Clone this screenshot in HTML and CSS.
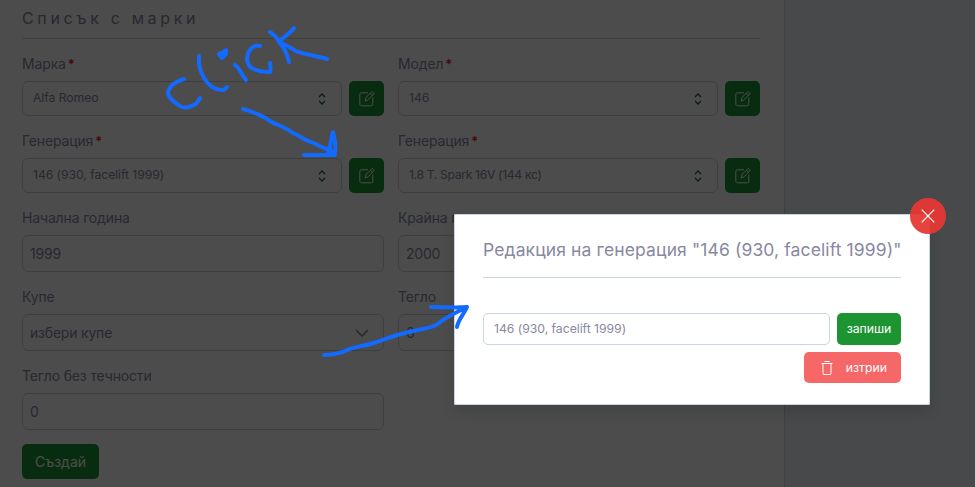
FILE: index.html
```html
<!DOCTYPE html>
<html lang="bg">
<head>
<meta charset="utf-8">
<title>Списък с марки</title>
<link rel="stylesheet" href="styles.css">
</head>
<body>
<svg class="defs" width="0" height="0">
  <symbol id="edit" viewBox="0 0 16 16"><path d="M9 1.8H2.3Q.8 1.8.8 3.3v10q0 1.5 1.5 1.5h10q1.500 0 1.500-1.500V6.500M6 10l.9-3.400L12.700.9q.7-.6 1.400 0l.6.6q.7.700 0 1.400L9 8.900zM11.500 2.200l2 2"/></symbol>
  <symbol id="sort" viewBox="0 0 8 12"><path d="M1 4l3-3 3 3M1 8l3 3 3-3"/></symbol>
</svg>
<main class="page">
  <section class="panel">
    <h1 class="heading">Списък с марки</h1>
    <form class="form">
      <div class="field">
        <label class="label">Марка<b class="req">*</b></label>
        <div class="picker"><div class="select"><span>Alfa Romeo</span><svg class="sort"><use href="#sort"/></svg></div><button type="button" class="edit"><svg><use href="#edit"/></svg></button></div>
      </div>
      <div class="field">
        <label class="label">Модел<b class="req">*</b></label>
        <div class="picker"><div class="select"><span>146</span><svg class="sort"><use href="#sort"/></svg></div><button type="button" class="edit"><svg><use href="#edit"/></svg></button></div>
      </div>
      <div class="field">
        <label class="label">Генерация<b class="req">*</b></label>
        <div class="picker"><div class="select"><span>146 (930, facelift 1999)</span><svg class="sort"><use href="#sort"/></svg></div><button type="button" class="edit"><svg><use href="#edit"/></svg></button></div>
      </div>
      <div class="field">
        <label class="label">Генерация<b class="req">*</b></label>
        <div class="picker"><div class="select"><span class="engine">1.8 T. Spark 16V (144 кс)</span><svg class="sort"><use href="#sort"/></svg></div><button type="button" class="edit"><svg><use href="#edit"/></svg></button></div>
      </div>
      <div class="field"><label class="label">Начална година</label><div class="input">1999</div></div>
      <div class="field"><label class="label">Крайна година</label><div class="input">2000</div></div>
      <div class="field"><label class="label">Купе</label><div class="input"><span>избери купе</span><svg class="chevron" viewBox="0 0 14 8"><path d="M1 1l6 6 6-6"/></svg></div></div>
      <div class="field"><label class="label">Тегло</label><div class="input">0</div></div>
      <div class="field"><label class="label">Тегло без течности</label><div class="input">0</div></div>
      <button type="button" class="create">Създай</button>
    </form>
  </section>
</main>
<div class="overlay"></div>
<div class="modal">
  <button class="close"><svg viewBox="0 0 14 14"><path d="M.7.7l12.600 12.600M13.300.7L.7 13.300"/></svg></button>
  <h2 class="modal-title">Редакция на генерация "146 (930, facelift 1999)"</h2>
  <div class="modal-row"><div class="modal-input">146 (930, facelift 1999)</div><button class="save">запиши</button></div>
  <button class="delete"><svg viewBox="0 0 12 16"><path d="M3.500 1.500h5M.5 3.500h11M2 3.500v10q0 1 1 1h6q1 0 1-1v-10"/></svg>изтрии</button>
</div>
<svg class="ink" viewBox="0 0 975 487">
  <path d="M184 79C177 81 170 85 168 92C168 99 176 103 180 106C184 109 190 107 194 105C198 103 198 101 200 98"/>
  <path d="M199 56C198 65 200 71 204 78C209 86 216 90 222 90Q225 90 227 87"/>
  <path class="dot" d="M219 54l3-1 4-3v4l-4 4z"/>
  <path d="M235 65C239 67 241 74 246 80M260 46C252 44 247 52 247 60C248 69 258 72 270 72Q271 69 270 63"/>
  <path d="M270 32C277 36 278 41 283 47C286 52 288 56 289 62M294 28C289 35 284 36 279 42C287 45 291 48 296 51C305 55 315 55 327 59"/>
  <path d="M243 109C252 111 259 115 266 118C271 124 283 125 293 133C301 136 303 140 311 142C320 146 327 150 334 152M304 155H335M328 154C331 147 331 137 333 132C335 139 336 147 335 152M329 148l5 6"/>
  <path d="M324 355C332 355 338 353 343 352C353 346 363 347 377 342C390 337 402 333 418 330C427 328 434 327 438 324C445 317 458 312 467 307M431 307C445 307 456 308 467 307C464 314 458 320 457 327"/>
</svg>
</body>
</html>
```

FILE: styles.css
```css
* { box-sizing: border-box; }
body { margin: 0; width: 975px; height: 487px; overflow: hidden; background: #eff3f8; color: #8888a0; font: 14px/20px Inter, "Liberation Sans", sans-serif; position: relative; }
button { font: inherit; border: 0; padding: 0; color: #fff; }
svg { fill: none; stroke: currentColor; display: block; }
.defs { position: absolute; }
.panel { width: 785px; height: 487px; background: #fff; border-right: 1px solid #c9d5e2; padding: 0 24px 0 22px; }
.heading { margin: 0 0 14px; height: 39px; padding-top: 8px; border-bottom: 1px solid #d8d8c8; font-size: 16px; font-weight: 400; letter-spacing: 3.65px; }
.form { display: grid; grid-template-columns: 362px 362px; gap: 14px; }
.label { display: block; height: 28px; padding-top: 1px; letter-spacing: -.15px; }
.req { color: #d81e1e; font-weight: 600; font-size: 13px; margin-left: 2px; }
.picker { display: flex; gap: 7px; }
.select, .input { border: 1px solid #c9d5e2; border-radius: 6px; display: flex; align-items: center; justify-content: space-between; }
.select { width: 320px; height: 35px; padding: 0 15px 0 10px; font-size: 12.25px; letter-spacing: -.08px; }
.select span { padding-bottom: 2px; }
.select .engine { letter-spacing: -.38px; }
.sort { width: 8px; height: 12px; color: #166044; stroke-width: 1.3; }
.input { height: 37px; padding: 0 14px 0 7px; letter-spacing: -.2px; }
.chevron { width: 14px; height: 8px; stroke-width: 1.6; }
.edit, .create { height: 35px; background: #1c9432; border-radius: 5px; }
.edit { width: 35px; display: grid; place-items: center; }
.edit svg { width: 16px; height: 16px; }
.create { width: 77px; grid-column: 1; }
.overlay { position: absolute; inset: 0; background: rgba(0,0,0,.7); }
.modal { position: absolute; left: 454px; top: 214px; width: 476px; height: 191px; padding: 0 28px; background: #fff; border: 1px solid #c9d5e2; border-radius: 1px; box-shadow: 0 7px 14px rgba(0,0,0,.12); font-size: 12.25px; }
.modal-title { margin: 0 0 35px; height: 63px; padding-top: 24px; border-bottom: 1px solid #c9d5e2; font-size: 17.5px; line-height: 22px; font-weight: 400; letter-spacing: .12px; white-space: nowrap; }
.modal-row { display: flex; gap: 7px; }
.modal-input { width: 347px; height: 32px; border: 1px solid #c9d5e2; border-radius: 5px; padding: 5px 10px; letter-spacing: -.04px; }
.save { width: 64px; height: 32px; background: #1c9432; border-radius: 5px; }
.delete { width: 97px; height: 31px; margin: 7px 0 0 auto; padding: 0 14px 0 17px; display: flex; align-items: center; justify-content: space-between; background: #f66868; border-radius: 5px; }
.delete svg { width: 12px; height: 16px; }
.close { position: absolute; right: -17px; top: -17px; width: 36px; height: 36px; border-radius: 50%; background: rgba(229,57,53,.95); display: grid; place-items: center; }
.close svg { width: 14px; height: 14px; stroke-width: 1.2; }
.ink { position: absolute; inset: 0; width: 975px; height: 487px; color: #126aff; stroke-width: 4; stroke-linecap: round; stroke-linejoin: round; pointer-events: none; }
.dot { fill: #126aff; }
```
